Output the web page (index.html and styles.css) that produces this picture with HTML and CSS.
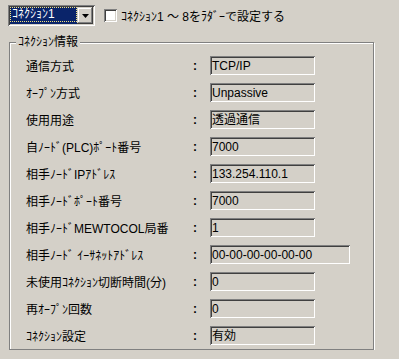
FILE: index.html
```html
<!DOCTYPE html>
<html lang="ja">
<head>
    <meta charset="UTF-8">
    <title>ｺﾈｸｼｮﾝ情報</title>
    <link rel="stylesheet" href="styles.css">
</head>
<body>
    <div class="panel">
        <!-- connection select -->
        <div class="toolbar">
            <div class="combo">
                <span class="combo-text"><span class="focus">ｺﾈｸｼｮﾝ1</span></span>
                <span class="combo-btn">
                    <svg width="7" height="4" viewBox="0 0 7 4"><path d="M0 0h7L3.5 4z" fill="#000"/></svg>
                </span>
            </div>
            <label class="check"><span class="box"></span>ｺﾈｸｼｮﾝ1 ～ 8をﾗﾀﾞｰで設定する</label>
        </div>

        <!-- connection info -->
        <fieldset class="group">
            <legend>ｺﾈｸｼｮﾝ情報</legend>
            <div class="row"><span class="label">通信方式</span><span class="colon">:</span><span class="field">TCP/IP</span></div>
            <div class="row"><span class="label">ｵｰﾌﾟﾝ方式</span><span class="colon">:</span><span class="field">Unpassive</span></div>
            <div class="row"><span class="label">使用用途</span><span class="colon">:</span><span class="field">透過通信</span></div>
            <div class="row"><span class="label">自ﾉｰﾄﾞ(PLC)ﾎﾟｰﾄ番号</span><span class="colon">:</span><span class="field">7000</span></div>
            <div class="row"><span class="label">相手ﾉｰﾄﾞIPｱﾄﾞﾚｽ</span><span class="colon">:</span><span class="field">133.254.110.1</span></div>
            <div class="row"><span class="label">相手ﾉｰﾄﾞﾎﾟｰﾄ番号</span><span class="colon">:</span><span class="field">7000</span></div>
            <div class="row"><span class="label">相手ﾉｰﾄﾞMEWTOCOL局番</span><span class="colon">:</span><span class="field">1</span></div>
            <div class="row"><span class="label">相手ﾉｰﾄﾞ ｲｰｻﾈｯﾄｱﾄﾞﾚｽ</span><span class="colon">:</span><span class="field wide">00-00-00-00-00-00</span></div>
            <div class="row"><span class="label">未使用ｺﾈｸｼｮﾝ切断時間(分)</span><span class="colon">:</span><span class="field">0</span></div>
            <div class="row"><span class="label">再ｵｰﾌﾟﾝ回数</span><span class="colon">:</span><span class="field">0</span></div>
            <div class="row"><span class="label">ｺﾈｸｼｮﾝ設定</span><span class="colon">:</span><span class="field">有効</span></div>
        </fieldset>
    </div>
</body>
</html>
```

FILE: styles.css
```css
body {
    margin: 0;
    padding: 0;
    background-color: #d4d0c8;
    color: #000;
    font-family: "Liberation Sans", "Noto Sans CJK JP", sans-serif;
    font-size: 12px;
}
.panel {
    padding: 5px 7px 0 9px;
}
.toolbar {
    display: flex;
    align-items: center;
    height: 21px;
}
.combo {
    display: flex;
    width: 83px;
    height: 17px;
    padding: 2px;
    background-color: #fff;
    box-shadow: inset 1px 1px 0 #808080, inset -1px -1px 0 #fff, inset 2px 2px 0 #404040, inset -2px -2px 0 #d4d0c8;
    margin-left: -1px;
}
.combo-text {
    flex: 1;
    padding: 1px;
    background-color: #0a246a;
    color: #fff;
}
.focus {
    display: block;
    height: 13px;
    line-height: 13px;
    outline: 1px dotted #f0e080;
    outline-offset: 0;
    padding-left: 1px;
}
.combo-btn {
    width: 16px;
    display: flex;
    align-items: center;
    justify-content: center;
    background-color: #d4d0c8;
    box-shadow: inset -1px -1px 0 #404040, inset 1px 1px 0 #d4d0c8, inset -2px -2px 0 #808080, inset 2px 2px 0 #fff;
}
.check {
    display: flex;
    align-items: center;
    margin-left: 9px;
}
.box {
    width: 13px;
    height: 13px;
    box-sizing: border-box;
    background-color: #fff;
    box-shadow: inset 1px 1px 0 #808080, inset -1px -1px 0 #fff, inset 2px 2px 0 #404040, inset -2px -2px 0 #d4d0c8;
    margin-right: 4px;
}
.group {
    margin: 9px 0 0 0;
    padding: 3px 0 0 16px;
    border: 1px solid #808080;
    box-shadow: inset 1px 1px 0 #fff, 1px 1px 0 #fff;
    width: 365px;
    box-sizing: border-box;
}
.group legend {
    padding: 0 2px;
    margin-left: -10px;
    background-color: #d4d0c8;
    line-height: 14px;
}
.row {
    display: grid;
    grid-template-columns: 167px 17px auto;
    align-items: center;
    height: 27px;
}
.colon {
    font-weight: bold;
}
.field {
    width: 105px;
    height: 19px;
    box-sizing: border-box;
    line-height: 16px;
    padding: 2px 0 0 2px;
    box-shadow: inset 1px 1px 0 #808080, inset -1px -1px 0 #fff, inset 2px 2px 0 #404040, inset -2px -2px 0 #d4d0c8;
    white-space: nowrap;
}
.field.wide {
    width: 140px;
}
```
